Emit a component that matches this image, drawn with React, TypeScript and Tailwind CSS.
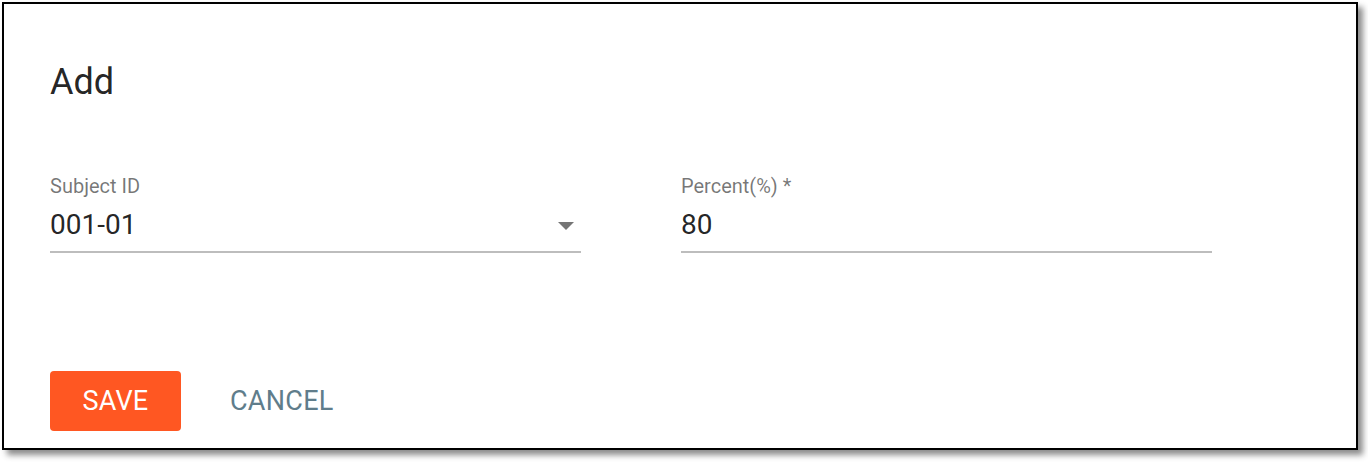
import React from "react";

export default function App() {
  return (
    <div className="w-[1368px] h-[462px] bg-white pl-[2px] pt-[2px]" style={{ fontFamily: "Roboto, 'Liberation Sans', sans-serif" }}>
      <div className="w-[1356px] h-[448px] border-2 border-black bg-white shadow-[5px_5px_6px_rgba(0,0,0,0.45)] pl-[46px] pt-[56px] flex flex-col">
        <h1 className="text-[36px] leading-[44px] text-[rgba(0,0,0,0.87)]">Add</h1>
        <div className="flex gap-[100px] mt-[70px]">
          <div className="w-[531px] flex flex-col">
            <label className="text-[20px] leading-[24px] text-[rgba(0,0,0,0.54)]">Subject ID</label>
            <div className="flex items-center justify-between h-[55px] border-b-2 border-[#bdbdbd]">
              <span className="text-[28px] text-[rgba(0,0,0,0.87)]">001-01</span>
              <svg width="16" height="8" viewBox="0 0 16 8" className="mr-[7px] mt-[2px]">
                <path d="M0 0 L16 0 L8 8 Z" fill="#757575" />
              </svg>
            </div>
          </div>
          <div className="w-[531px] flex flex-col">
            <label className="text-[20px] leading-[24px] text-[rgba(0,0,0,0.54)]">Percent(%) *</label>
            <div className="flex items-center h-[55px] border-b-2 border-[#bdbdbd]">
              <span className="text-[28px] text-[rgba(0,0,0,0.87)]">80</span>
            </div>
          </div>
        </div>
        <div className="flex items-center gap-[49px] mt-[118px]">
          <button className="w-[131px] h-[60px] rounded-[4px] bg-[#ff5722] text-white text-[27px] tracking-[0.2px]">SAVE</button>
          <button className="text-[27px] tracking-[0.3px] text-[#607d8b]">CANCEL</button>
        </div>
      </div>
    </div>
  );
}
